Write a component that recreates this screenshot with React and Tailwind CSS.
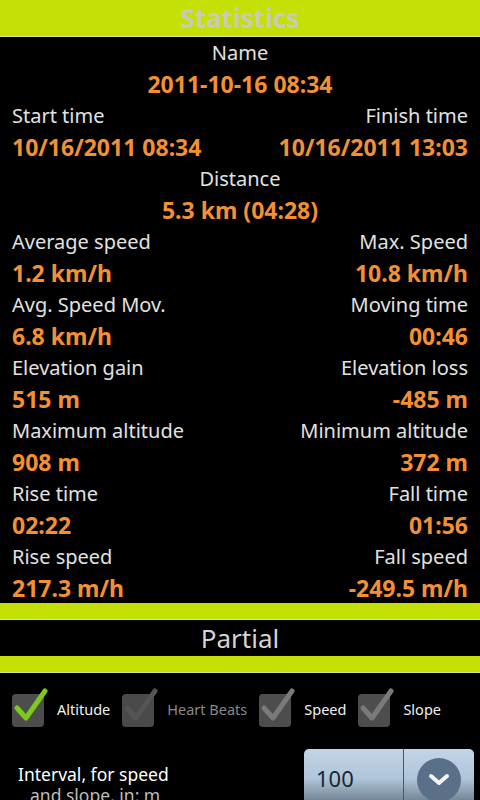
import React from "react";

const rows = [
  { center: true, label: "Name", value: "2011-10-16 08:34" },
  { left: ["Start time", "10/16/2011 08:34"], right: ["Finish time", "10/16/2011 13:03"] },
  { center: true, label: "Distance", value: "5.3 km (04:28)" },
  { left: ["Average speed", "1.2 km/h"], right: ["Max. Speed", "10.8 km/h"] },
  { left: ["Avg. Speed Mov.", "6.8 km/h"], right: ["Moving time", "00:46"] },
  { left: ["Elevation gain", "515 m"], right: ["Elevation loss", "-485 m"] },
  { left: ["Maximum altitude", "908 m"], right: ["Minimum altitude", "372 m"] },
  { left: ["Rise time", "02:22"], right: ["Fall time", "01:56"] },
  { left: ["Rise speed", "217.3 m/h"], right: ["Fall speed", "-249.5 m/h"] },
];

const Label = ({ children }) => (
  <div className="text-[20px] leading-[31.5px] text-[#e2e2e2]">{children}</div>
);

const Value = ({ children }) => (
  <div className="text-[23px] leading-[31.5px] font-bold text-[#f39032]">{children}</div>
);

// checkbox glyph, box is 32x33 with the tick overflowing to the top right
const Check = ({ color = "#7a7a7a", box = "#4d4d4d" }) => (
  <svg width="32" height="33" viewBox="0 0 32 33" overflow="visible">
    <rect x="0" y="0" width="32" height="33" rx="4" fill={box} />
    <path
      d="M5 14 L14 24 L33 -3"
      fill="none"
      stroke={color}
      strokeWidth="5"
      strokeLinecap="round"
      strokeLinejoin="round"
    />
  </svg>
);

const Option = ({ label, dim, children }) => (
  <div className="flex items-center gap-[13px]">
    {children}
    <span className={"text-[14.5px] " + (dim ? "text-[#8a8a8a]" : "text-[#f0f0f0]")}>{label}</span>
  </div>
);

export default function App() {
  return (
    <div className="w-[480px] h-[800px] overflow-hidden bg-black font-['Noto_Sans',sans-serif]">
      <div className="h-[37px] bg-[#c4e004] border-b border-[#d6e6a0] flex items-center justify-center">
        <span className="text-[26px] font-bold text-[#c9cbb8] leading-none">Statistics</span>
      </div>

      <div className="px-3 h-[566px]">
        {rows.map((r, i) =>
          r.center ? (
            <div key={i} className="text-center">
              <Label>{r.label}</Label>
              <Value>{r.value}</Value>
            </div>
          ) : (
            <div key={i} className="flex justify-between">
              <div>
                <Label>{r.left[0]}</Label>
                <Value>{r.left[1]}</Value>
              </div>
              <div className="text-right">
                <Label>{r.right[0]}</Label>
                <Value>{r.right[1]}</Value>
              </div>
            </div>
          )
        )}
      </div>

      <div className="h-[17px] bg-[#c4e004] border-b border-[#d6e6a0]" />
      <div className="h-[36px] flex items-center justify-center text-[26px] text-[#d4d4d4]">Partial</div>
      <div className="h-[17px] bg-[#c4e004] border-b border-[#d6e6a0]" />

      <div className="flex items-center gap-[12px] pl-[12px] h-[74px]">
        <Option label="Altitude">
          <Check color="#7ccb1a" />
        </Option>
        <Option label="Heart Beats" dim>
          <Check color="#545454" box="#4a4a4a" />
        </Option>
        <Option label="Speed">
          <Check />
        </Option>
        <Option label="Slope">
          <Check />
        </Option>
      </div>

      <div className="flex justify-between pl-[18px] pr-[6px] pt-[2px]">
        <div className="pt-[15px] text-[17.5px] leading-[21px] text-white">
          <div>Interval, for speed</div>
          <div className="pl-[12px] text-[#bdbdbd]">and slope, in: m</div>
        </div>
        <div className="flex w-[170px] h-[60px] rounded-[5px] overflow-hidden bg-gradient-to-b from-[#c3d6e8] via-[#aec4d8] to-[#5f6f7e]">
          <div className="w-[100px] border-r border-[#47576a] pl-[12px] pt-[18px] text-[22px] leading-none text-[#1c2530]">
            100
          </div>
          <div className="flex-1 flex justify-center pt-[9px]">
            <div className="w-[44px] h-[44px] rounded-full bg-[#5a7089] flex items-center justify-center">
              <svg width="22" height="14" viewBox="0 0 22 14">
                <path d="M3 3 L11 10 L19 3" fill="none" stroke="#f4f4f4" strokeWidth="4" strokeLinecap="round" strokeLinejoin="round" />
              </svg>
            </div>
          </div>
        </div>
      </div>
    </div>
  );
}
